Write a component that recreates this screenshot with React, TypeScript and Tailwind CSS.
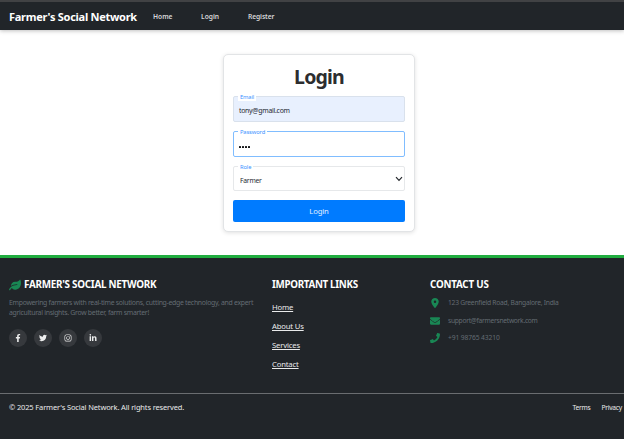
import type { ReactNode } from "react";
import {
  FaLeaf,
  FaFacebookF,
  FaTwitter,
  FaInstagram,
  FaLinkedinIn,
  FaEnvelope,
  FaPhone,
} from "react-icons/fa";
import { FaLocationDot } from "react-icons/fa6";

const socials = [FaFacebookF, FaTwitter, FaInstagram, FaLinkedinIn];
const links = ["Home", "About Us", "Services", "Contact"];
const contacts = [
  { Icon: FaLocationDot, text: "123 Greenfield Road, Bangalore, India", tracking: "tracking-[-0.23px]" },
  { Icon: FaEnvelope, text: "support@farmersnetwork.com", tracking: "tracking-[-0.28px]" },
  { Icon: FaPhone, text: "+91 98765 43210", tracking: "tracking-[-0.1px]" },
];

function Field({ label, box, children }: { label: string; box: string; children: ReactNode }) {
  return (
    <div className={`relative flex w-full items-center rounded-[2px] border ${box}`}>
      <span className="absolute -top-[4px] left-[4px] h-[8px] bg-white px-[2px] text-[5.8px] leading-[9px] tracking-[-0.14px] text-[#3b93ff]">
        {label}
      </span>
      {children}
    </div>
  );
}

function NavBar() {
  return (
    <header className="relative flex h-[30px] items-center border-t-2 border-[#414244] bg-[#212529] pl-[9px] pt-[2px] shadow-[0_1px_4px_rgba(0,0,0,0.25)]">
      <span className="w-[144px] whitespace-nowrap pb-[2px] text-[11px] font-bold leading-none tracking-[-0.27px] text-white">
        Farmer's Social Network
      </span>
      <nav className="flex text-[6.7px] font-semibold leading-none text-[#d5d6d8]">
        <a className="w-[48px]">Home</a>
        <a className="w-[47px]">Login</a>
        <a className="tracking-[-0.1px]">Register</a>
      </nav>
    </header>
  );
}

function LoginCard() {
  return (
    <form className="flex h-[178px] w-[192px] flex-col rounded-[5px] border border-[#e2e4e6] bg-white px-[9px] pt-[9px] shadow-[0_1px_4px_rgba(0,0,0,0.12)]">
      <h1 className="h-[32px] text-center text-[19.5px] font-bold leading-[26px] tracking-[-0.8px] text-[#2c2d2f]">Login</h1>
      <Field label="Email" box="h-[26px] border-[#d9e1ec] bg-[#e8f0fe]">
        <span className="pl-[5px] pt-[5px] text-[6.9px] leading-none tracking-[-0.27px] text-[#252932]">tony@gmail.com</span>
      </Field>
      <div className="mt-[9px]">
        <Field label="Password" box="h-[26px] border-[#80bdff]">
          <span className="flex gap-[1px] pl-[5px] pt-[5px]">
            {[0, 1, 2, 3].map((n) => (
              <i key={n} className="size-[2px] rounded-[0.5px] bg-[#101214]" />
            ))}
          </span>
        </Field>
      </div>
      <div className="mt-[9px]">
        <Field label="Role" box="h-[25px] border-[#e6e8ea]">
          <span className="flex-1 pl-[6px] pt-[5px] text-[6.8px] leading-none tracking-[-0.25px] text-[#252932]">Farmer</span>
          <svg viewBox="0 0 8 6" className="mr-[1px] h-[6px] w-[8px]" fill="none" stroke="#25292d" strokeWidth="1.2">
            <path d="M1 1.2 4 4.4 7 1.2" />
          </svg>
        </Field>
      </div>
      <button className="mt-[9px] h-[22px] rounded-[2px] bg-[#007bff] text-center text-[7.7px] leading-[22px] tracking-[-0.15px] text-[#e3f0ff]">
        Login
      </button>
    </form>
  );
}

function Footer() {
  return (
    <footer className="h-[184px] border-t-[3px] border-[#21ad40] bg-[#212529] text-white">
      <div className="flex h-[135px] pl-[9px] pt-[19px]">
        <section className="w-[263px]">
          <h2 className="flex items-center gap-[3px] text-[9.9px] font-bold leading-[15px] tracking-[-0.27px]">
            <FaLeaf className="size-[12px] text-[#198754]" />
            <span>FARMER'S SOCIAL NETWORK</span>
          </h2>
          <p className="mt-[6px] whitespace-nowrap text-[6.9px] leading-[10px] tracking-[-0.29px] text-[#646c73]">
            Empowering farmers with real-time solutions, cutting-edge technology, and expert
            <br />
            agricultural insights. Grow better, farm smarter!
          </p>
          <div className="mt-[11px] flex gap-[7px]">
            {socials.map((Icon, n) => (
              <span key={n} className="flex size-[18px] items-center justify-center rounded-full bg-[#36393d]">
                <Icon className="size-[8px] text-[#edeeee]" />
              </span>
            ))}
          </div>
        </section>
        <section className="w-[158px]">
          <h2 className="text-[9.8px] font-bold leading-[15px] tracking-[-0.31px]">IMPORTANT LINKS</h2>
          <ul className="mt-[6px] text-[7.7px] leading-[19px] tracking-[-0.18px] text-[#e9eaeb]">
            {links.map((link) => (
              <li key={link}>
                <a className="underline decoration-[0.7px] underline-offset-[1px]">{link}</a>
              </li>
            ))}
          </ul>
        </section>
        <section>
          <h2 className="text-[9.8px] font-bold leading-[15px] tracking-[-0.2px]">CONTACT US</h2>
          <ul className="mt-[2px]">
            {contacts.map(({ Icon, text, tracking }) => (
              <li key={text} className="flex h-[17.7px] items-center gap-[8px]">
                <Icon className="size-[10px] text-[#198754]" />
                <span className={`whitespace-nowrap pt-px text-[6.7px] leading-none text-[#646c73] ${tracking}`}>{text}</span>
              </li>
            ))}
          </ul>
        </section>
      </div>
      <div className="flex justify-between border-t border-[#6a6d70] pl-[9px] pr-[2px] pt-[8px] leading-[11px] text-[#e9eaeb]">
        <span className="text-[7.5px] tracking-[-0.14px]">© 2025 Farmer's Social Network. All rights reserved.</span>
        <span className="flex gap-[11px] text-[6.7px] tracking-[-0.25px]">
          <a>Terms</a>
          <a>Privacy</a>
        </span>
      </div>
    </footer>
  );
}

export default function App() {
  return (
    <div className="flex h-[439px] w-[624px] flex-col overflow-hidden bg-white font-['Noto_Sans','Open_Sans',sans-serif]">
      <NavBar />
      <main className="flex h-[225px] justify-center pl-[14px] pt-[24px]">
        <LoginCard />
      </main>
      <Footer />
    </div>
  );
}
